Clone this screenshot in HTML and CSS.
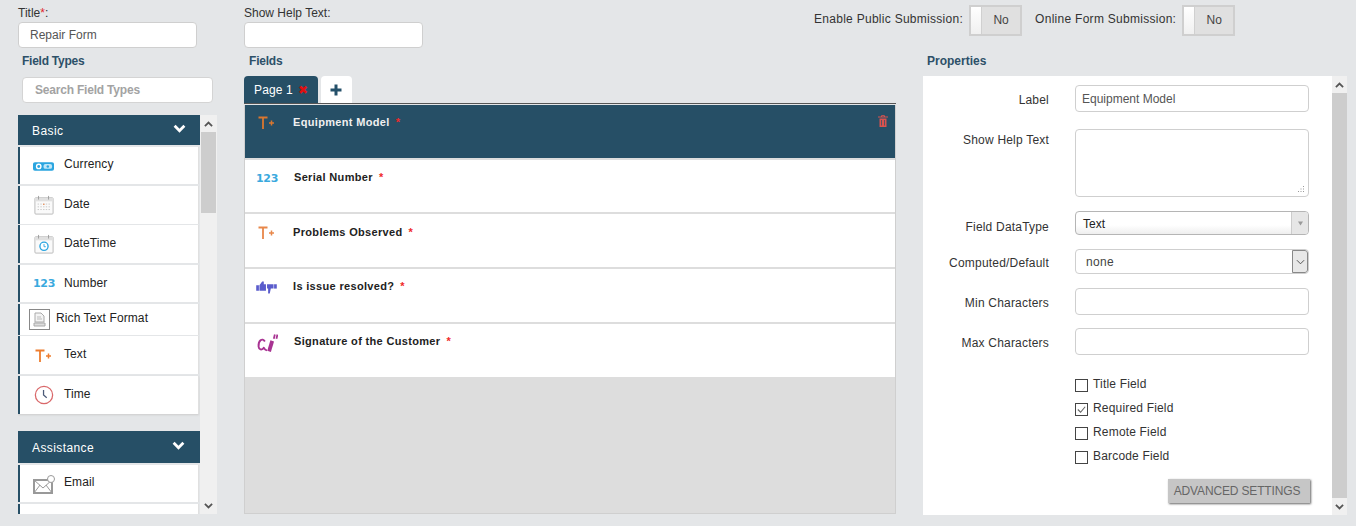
FILE: index.html
```html
<!DOCTYPE html>
<html lang="en">
<head>
<meta charset="utf-8">
<title>Repair Form</title>
<link rel="stylesheet" href="styles.css">
</head>
<body>
<div class="top">
  <div class="top-field">
    <label class="top-label">Title<span class="req">*</span>:</label>
    <input class="text-input" type="text" value="Repair Form">
  </div>
  <div class="top-field help">
    <label class="top-label">Show Help Text:</label>
    <input class="text-input" type="text">
  </div>
  <div class="toggles">
    <span class="toggle-label">Enable Public Submission:</span>
    <span class="toggle"><i class="handle"></i><b class="state">No</b></span>
    <span class="toggle-label second">Online Form Submission:</span>
    <span class="toggle"><i class="handle"></i><b class="state">No</b></span>
  </div>
</div>
<div class="main">
  <section class="col-left">
    <h2 class="heading">Field Types</h2>
    <input class="search" type="text" placeholder="Search Field Types">
    <div class="list-wrap">
      <div class="list">
        <div class="group-head first">Basic<svg class="chev" viewBox="0 0 12 8"><path d="M1.500 1.500L6 6l4.500-4.500" fill="none" stroke="#fff" stroke-width="2.600"/></svg></div>
        <div class="item h37"><svg class="ico" viewBox="0 0 22 12"><rect x="0" y="2" width="22" height="9" rx="2" fill="#2aa5e0"/><circle cx="6" cy="6.500" r="3" fill="#fff"/><circle cx="6" cy="6.500" r="1.500" fill="#2aa5e0"/><rect x="11" y="4" width="9" height="5" rx="2" fill="#bfe6f8"/><circle cx="15.500" cy="6.500" r="1.300" fill="#2aa5e0"/></svg><span>Currency</span></div>
        <div class="item h38"><svg class="ico tall" viewBox="0 0 22 22"><rect x="1" y="3" width="20" height="18" rx="1" fill="#fafafa" stroke="#b5b5b5"/><rect x="1" y="3" width="20" height="4" fill="#e0e0e0"/><path d="M5 1v4M16 1v4" stroke="#999"/><path d="M4 10h14M4 13h14M4 16h14" stroke="#c4c4c4" stroke-dasharray="1.500 1.500"/><rect x="10" y="9.500" width="1.500" height="1.500" fill="#e8905a"/></svg><span>Date</span></div>
        <div class="item h38 near"><svg class="ico tall" viewBox="0 0 22 22"><rect x="1" y="3" width="20" height="18" rx="1" fill="#fafafa" stroke="#b5b5b5"/><rect x="1" y="3" width="20" height="4" fill="#e0e0e0"/><path d="M5 1v4M16 1v4" stroke="#999"/><circle cx="11" cy="13.500" r="4.500" fill="#fff" stroke="#2aa5e0" stroke-width="1.500"/><path d="M11 11v3h2" fill="none" stroke="#2aa5e0"/></svg><span>DateTime</span></div>
        <div class="item h37 low"><span class="num">123</span><span>Number</span></div>
        <div class="item rich"><svg class="rich-ico" viewBox="0 0 21 21"><rect x="0.500" y="0.500" width="20" height="20" fill="#fff" stroke="#888"/><path d="M6 4h6l3 3v6H6z" fill="#f4f4f4" stroke="#aaa"/><path d="M5 14h11v3H5z" fill="#ddd" stroke="#aaa"/><path d="M8 8h4M8 10h5" stroke="#bbb"/></svg><span>Rich Text Format</span></div>
        <div class="item h38 near"><svg class="ico" viewBox="0 0 18 14"><path d="M1 1.500h9M5.500 1.500V13" fill="none" stroke="#ee7d2e" stroke-width="1.800"/><path d="M11.500 7h5M14 4.500v5" stroke="#ee7d2e" stroke-width="1.500"/></svg><span>Text</span></div>
        <div class="item h38 last"><svg class="ico tall" viewBox="0 0 22 22"><circle cx="11" cy="11" r="9.500" fill="#fff" stroke="#d9686a" stroke-width="1.400"/><path d="M10.500 5.500V11l3.500 3" fill="none" stroke="#4b5a78" stroke-width="1.400"/></svg><span>Time</span></div>
        <div class="group-head second">Assistance<svg class="chev" viewBox="0 0 12 8"><path d="M1.500 1.500L6 6l4.500-4.500" fill="none" stroke="#fff" stroke-width="2.600"/></svg></div>
        <div class="item h37"><svg class="ico tall mail" viewBox="0 0 22 20"><rect x="1" y="5" width="18" height="13" fill="#fff" stroke="#999" stroke-width="2"/><path d="M1 5l9 8 9-8M1 18l6-8M19 18l-6-8" fill="none" stroke="#999"/><circle cx="18" cy="4" r="3.500" fill="#fff" stroke="#999"/></svg><span>Email</span></div>
        <div class="item h37"></div>
      </div>
      <div class="scrollbar">
        <span class="arrow"><svg viewBox="0 0 8 5"><path d="M.8 4.300L4 1.200l3.200 3.100" fill="none" stroke="#555" stroke-width="1.600"/></svg></span>
        <span class="thumb left-thumb"></span>
        <span class="arrow end"><svg viewBox="0 0 8 5"><path d="M.8.700L4 3.800 7.200.7" fill="none" stroke="#555" stroke-width="1.600"/></svg></span>
      </div>
    </div>
  </section>

  <section class="col-mid">
    <h2 class="heading">Fields</h2>
    <div class="tabs">
      <div class="tab active">Page 1<span class="tab-x">✖</span></div>
      <div class="tab add"><svg viewBox="0 0 12 12"><path d="M6 .5v11M.5 6h11" stroke="#24506a" stroke-width="3"/></svg></div>
    </div>
    <div class="fields">
      <div class="row selected"><svg class="ficon t" viewBox="0 0 18 14"><path d="M1 1.500h9M5.500 1.500V13" fill="none" stroke="#d9772f" stroke-width="1.800"/><path d="M11.500 7h5M14 4.500v5" stroke="#d9772f" stroke-width="1.500"/></svg><span class="fname">Equipment Model<em>*</em></span><svg class="trash" viewBox="0 0 10 12"><path d="M0 2h10M3.500 2V.7h3V2" fill="none" stroke="#d9534f"/><path d="M1.500 3.500h7V12h-7z" fill="#d9534f"/><path d="M3.500 5v5.500M6.500 5v5.500" stroke="#24506a" stroke-width=".7"/></svg></div>
      <div class="row short"><span class="num small">123</span><span class="fname">Serial Number<em>*</em></span></div>
      <div class="row lower"><svg class="ficon t" viewBox="0 0 18 14"><path d="M1 1.500h9M5.500 1.500V13" fill="none" stroke="#e8874a" stroke-width="1.800"/><path d="M11.500 7h5M14 4.500v5" stroke="#e8874a" stroke-width="1.500"/></svg><span class="fname">Problems Observed<em>*</em></span></div>
      <div class="row"><svg class="ficon thumbs" viewBox="0 0 19 12"><path d="M0 4h2.500v5H0zM3 4l2.500-3.500H7V3h2v6H3z" fill="#5a5ccc"/><path d="M10 3h6v4h-2.500l-1 4.500H11V7h-1z" fill="#5a5ccc"/><path d="M16.500 3H19v4h-2.500z" fill="#5a5ccc"/></svg><span class="fname">Is issue resolved?<em>*</em></span></div>
      <div class="row"><svg class="ficon sig" viewBox="0 0 20 18"><path d="M7.500 7C5 3 1 6.500 1.500 12c.3 3 3 3.500 4.500 1.500 1-1.500.5 2 3.500 2" fill="none" stroke="#a83392" stroke-width="1.800"/><path d="M11.500 16.500l3-10" stroke="#a83392" stroke-width="3.600"/><path d="M16 4.500l1-4M18.500 4.500l1-4" stroke="#a83392" stroke-width="1.700"/></svg><span class="fname">Signature of the Customer<em>*</em></span></div>
    </div>
  </section>

  <section class="col-right">
    <h2 class="heading">Properties</h2>
    <div class="panel">
      <div class="form">
        <label class="f-label">Label</label>
        <input class="p-input" type="text" value="Equipment Model">
        <label class="f-label high">Show Help Text</label>
        <div class="p-area"><svg class="grip" viewBox="0 0 8 8"><path d="M6.500 1v1M4 3.500v1M6.500 3.500v1M1.500 6v1M4 6v1M6.500 6v1" stroke="#999"/></svg></div>
        <label class="f-label drop">Field DataType</label>
        <div class="p-combo"><span class="combo-text">Text</span><span class="combo-btn"><svg viewBox="0 0 6 5"><path d="M0 0h6L3 5z" fill="#999"/></svg></span></div>
        <label class="f-label mid">Computed/Default</label>
        <div class="p-select"><span class="select-text">none</span><span class="select-btn"><svg viewBox="0 0 10 6"><path d="M1 1l4 4 4-4" fill="none" stroke="#444"/></svg></span></div>
        <label class="f-label">Min Characters</label>
        <input class="p-input" type="text">
        <label class="f-label">Max Characters</label>
        <input class="p-input" type="text">
      </div>
      <div class="checks">
        <div class="check"><span class="box"></span>Title Field</div>
        <div class="check"><span class="box"><svg viewBox="0 0 12 12"><path d="M2 6l3 3 5-6" fill="none" stroke="#666" stroke-width="1.200"/></svg></span>Required Field</div>
        <div class="check"><span class="box"></span>Remote Field</div>
        <div class="check"><span class="box"></span>Barcode Field</div>
      </div>
      <div class="actions"><button class="adv" type="button">ADVANCED SETTINGS</button></div>
      <div class="scrollbar right">
        <span class="arrow"><svg viewBox="0 0 8 5"><path d="M.8 4.300L4 1.200l3.200 3.100" fill="none" stroke="#555" stroke-width="1.600"/></svg></span>
        <span class="thumb right-thumb"></span>
        <span class="arrow end"><svg viewBox="0 0 8 5"><path d="M.8.700L4 3.800 7.200.7" fill="none" stroke="#555" stroke-width="1.600"/></svg></span>
      </div>
    </div>
  </section>
</div>
</body>
</html>
```
FILE: styles.css
```css
* { box-sizing: border-box; }
html, body { margin: 0; height: 100%; overflow: hidden; }
body { background: #e4e6e8; font: 12px "Liberation Sans", Arial, sans-serif; color: #222; }

.top { display: flex; height: 48px; padding-left: 18px; }
.top-field { width: 179px; padding-top: 6px; }
.top-field.help { margin-left: 47px; }
.top-label { display: block; height: 16px; line-height: 14px; color: #333; }
.req { color: #e0262e; }
.text-input { display: block; width: 100%; height: 26px; border: 1px solid #cfcfcf; border-radius: 4px; background: #fff; padding: 0 11px; font: 12px "Liberation Sans", sans-serif; color: #555; outline: none; }

.toggles { display: flex; align-items: flex-start; margin-left: 391px; padding-top: 5px; }
.toggle-label { line-height: 28px; color: #333; margin-right: 6px; letter-spacing: .28px; }
.toggle-label.second { margin-left: 13px; }
.toggle { display: flex; width: 53px; height: 31px; border: 2px solid #cfcfcf; background: #e0e0e0; }
.handle { width: 11px; background: linear-gradient(#fff, #f0f0f0); border-right: 1px solid #d0d0d0; }
.state { flex: 1; text-align: center; font-weight: normal; line-height: 27px; color: #444; }

.main { display: flex; padding-left: 18px; }
.heading { margin: 0; font-size: 12px; font-weight: bold; color: #2d5068; line-height: 14px; height: 28px; padding-top: 6px; }

.col-left { width: 199px; flex: none; }
.col-left .heading { margin-left: 4px; height: 29px; padding-top: 6px; letter-spacing: -.25px; }
.search { display: block; width: 191px; height: 26px; margin-left: 4px; border: 1px solid #d4d4d4; border-radius: 4px; background: #fff; padding: 0 12px; font: bold 12px "Liberation Sans", sans-serif; letter-spacing: -.2px; outline: none; }
.search::placeholder { color: #a3a3a3; opacity: 1; }

.list-wrap { display: flex; height: 399px; margin-top: 12px; }
.list { width: 182px; flex: none; overflow: hidden; }
.group-head { display: flex; justify-content: space-between; align-items: center; height: 30px; background: #264f66; color: #fff; padding: 1px 14px 0 14px; letter-spacing: .4px; }
.group-head.second { height: 32px; margin-top: 17px; padding-top: 2px; padding-right: 15px; }
.chev { width: 13px; height: 9px; margin-top: -5px; }
.item { display: flex; align-items: flex-start; width: 181px; margin-top: 2px; background: #fff; border-left: 2px solid #264f66; border-right: 1px solid #e0e0e0; padding-left: 13px; line-height: 14px; letter-spacing: .1px; }
.item.near { margin-top: 1px; }
.h37 { height: 37px; padding-top: 10px; }
.h38 { height: 38px; padding-top: 11px; }
.h37.low { padding-top: 11px; }
.item.last { box-shadow: 0 1px 2px #ccc; }
.item.rich { height: 31px; padding: 5px 0 0 9px; }
.item.rich span { margin-top: 2px; }
.rich-ico { width: 21px; height: 21px; margin-right: 6px; flex: none; }
.ico { width: 21px; height: 14px; margin-right: 10px; flex: none; margin-top: 2px; }
.ico.tall { height: 20px; width: 22px; margin: -2px 9px 0 0; }
.ico.mail { margin-top: 0; }
.num { width: 31px; flex: none; color: #3aa9de; font: bold 11px "DejaVu Sans", sans-serif; letter-spacing: -.3px; padding-top: 1px; }

.scrollbar { display: flex; flex-direction: column; width: 17px; flex: none; background: #f0f0f0; }
.arrow { display: flex; align-items: center; justify-content: center; height: 17px; flex: none; }
.arrow svg { width: 9px; height: 6px; }
.thumb { background: #cdcdcd; margin: 0 1px; flex: none; }
.left-thumb { height: 81px; }
.arrow.end { margin-top: auto; }

.col-mid { width: 652px; flex: none; margin-left: 27px; }
.col-mid .heading { margin-left: 5px; letter-spacing: -.2px; }
.tabs { display: flex; height: 28px; border-bottom: 1px solid #555; }
.tab { height: 27px; border-radius: 4px 4px 0 0; }
.tab.active { width: 74px; background: #264f66; color: #fff; padding-left: 10px; line-height: 28px; letter-spacing: .15px; }
.tab-x { color: #e01010; font-size: 12px; margin-left: 5px; }
.tab.add { display: flex; align-items: center; justify-content: center; width: 31px; margin-left: 3px; padding-right: 2px; background: #fff; }
.tab.add svg { width: 12px; height: 12px; }
.fields { height: 409px; margin-top: 1px; background: #dddddd; border: 1px solid #cfcfcf; border-top: 0; }
.row { position: relative; display: flex; align-items: flex-start; height: 53px; margin-bottom: 2px; background: #fff; padding: 10px 0 0 11px; font-weight: bold; font-size: 11px; line-height: 14px; color: #222; letter-spacing: .33px; }
.row.short { height: 52px; }
.row.lower { padding-top: 11px; }
.row:last-child { margin-bottom: 0; }
.row.selected { background: #264f66; color: #f0f0f0; }
.fname em { color: #f02a2a; font-style: normal; margin-left: 6px; }
.ficon { flex: none; margin-right: 16px; }
.ficon.t { width: 21px; height: 14px; margin-top: 1px; }
.ficon.thumbs { width: 21px; height: 13px; margin-top: 2px; }
.ficon.sig { width: 21px; height: 19px; margin-left: 1px; margin-right: 16px; }
.num.small { width: 38px; font-size: 11px; padding-top: 2px; }
.trash { position: absolute; right: 7px; top: 10px; width: 10px; height: 12px; }

.col-right { width: 424px; flex: none; margin-left: 27px; }
.col-right .heading { margin-left: 4px; }
.panel { position: relative; height: 439px; background: #fff; padding-right: 15px; }
.form { display: grid; grid-template-columns: 126px 234px; column-gap: 26px; align-items: start; padding-top: 9px; }
.f-label { text-align: right; padding-top: 8px; line-height: 14px; color: #333; letter-spacing: .2px; }
.f-label.high { padding-top: 4px; }
.f-label.drop { padding-top: 9px; }
.f-label.mid { padding-top: 7px; }
.p-input { display: block; width: 234px; height: 27px; margin-bottom: 17px; border: 1px solid #cfcfcf; border-radius: 4px; padding: 0 6px; font: 12px "Liberation Sans", sans-serif; color: #555; background: #fff; outline: none; }
.form .p-input:nth-last-child(1), .form .p-input:nth-last-child(3) { margin-bottom: 13px; }
.p-area { position: relative; height: 68px; margin-bottom: 14px; border: 1px solid #cfcfcf; border-radius: 4px; }
.grip { position: absolute; right: 3px; bottom: 3px; width: 8px; height: 8px; }
.p-combo { display: flex; height: 24px; margin-bottom: 14px; border: 1px solid #b5b5b5; border-radius: 4px; background: linear-gradient(#fff 60%, #eee); overflow: hidden; line-height: 24px; }
.combo-text { flex: 1; padding-left: 7px; }
.combo-btn { display: flex; align-items: center; justify-content: center; width: 17px; background: #e6e6e6; border-left: 1px solid #ccc; }
.combo-btn svg { width: 5px; height: 5px; }
.p-select { display: flex; height: 25px; margin-bottom: 14px; border: 1px solid #cfcfcf; border-radius: 4px; overflow: hidden; line-height: 25px; color: #444; }
.select-text { flex: 1; padding-left: 10px; letter-spacing: .3px; }
.select-btn { display: flex; align-items: center; justify-content: center; width: 16px; background: #e8e8e8; border: 1px solid #888; border-radius: 0 3px 3px 0; }
.select-btn svg { width: 9px; height: 6px; }
.checks { margin-left: 152px; margin-top: 4px; }
.check { display: flex; align-items: center; height: 24px; color: #333; letter-spacing: .18px; }
.box { display: block; width: 13px; height: 13px; margin: 2px 5px 0 0; border: 1px solid #444; background: #fff; }
.box svg { display: block; width: 11px; height: 11px; }
.actions { display: flex; justify-content: flex-end; padding-right: 22px; margin-top: 11px; }
.adv { width: 142px; height: 24px; padding: 0 4px 0 0; border: 0; background: #c6c6c6; box-shadow: 1px 1px 2px #666; font: 12px "Liberation Sans", sans-serif; letter-spacing: -.15px; color: #666; }
.scrollbar.right { position: absolute; top: 0; right: 0; bottom: 0; width: 15px; margin: 0; }
.right-thumb { flex: 1; margin: 0; }
.scrollbar.right .arrow.end { margin-top: 0; }
```
